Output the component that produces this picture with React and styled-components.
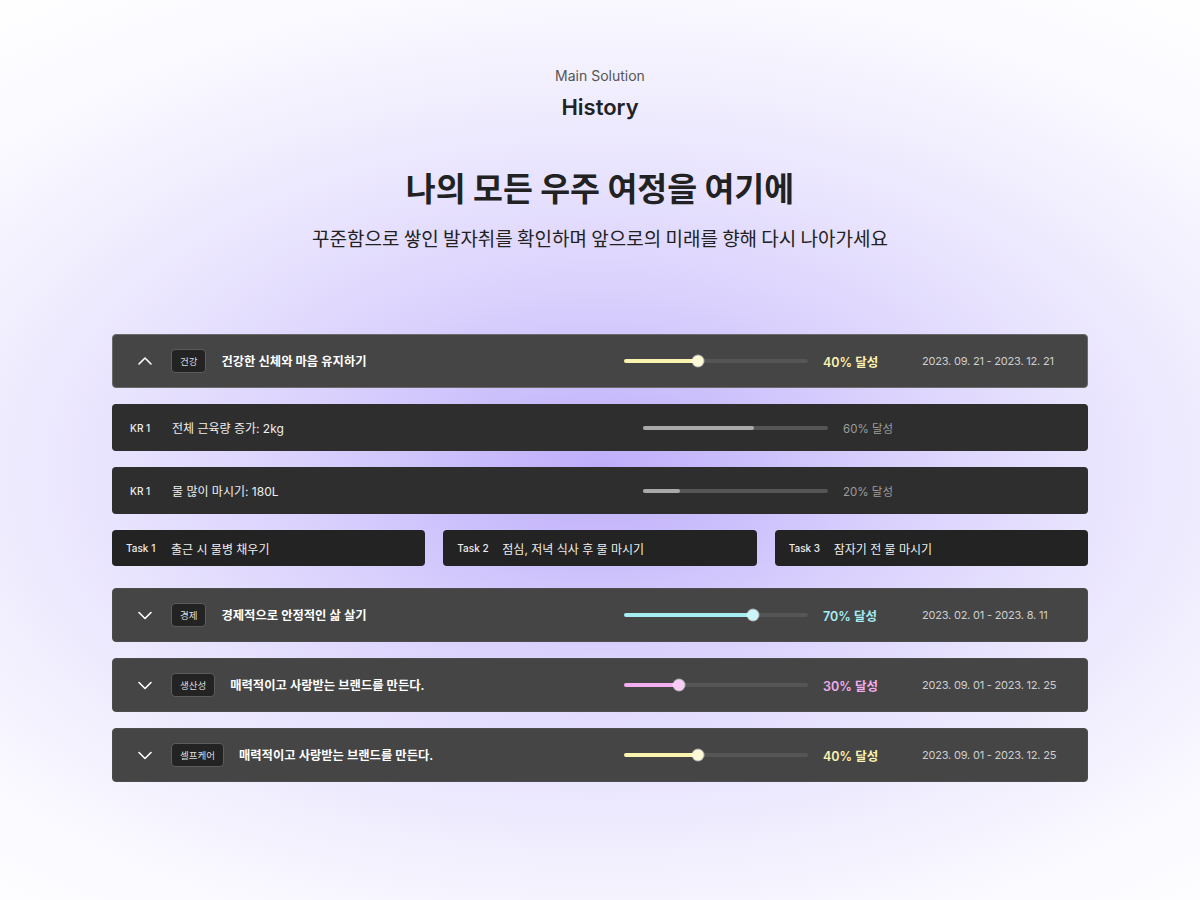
import React from 'react';
import styled, { createGlobalStyle } from 'styled-components';

const GlobalStyle = createGlobalStyle`
  html, body {
    margin: 0;
    padding: 0;
  }
  body {
    font-family: "Inter", "Noto Sans CJK KR", sans-serif;
    background: #ffffff;
  }
`;

const Page = styled.main`
  width: 1200px;
  height: 900px;
  overflow: hidden;
  background: radial-gradient(
    ellipse 1000px 600px at 50% 470px,
    #bfadfb 0%,
    #cbbffc 15%,
    #dad1fd 30%,
    #e9e4fe 50%,
    #f2effe 65%,
    #faf9ff 80%,
    #ffffff 100%
  );
  display: flex;
  flex-direction: column;
  align-items: center;
`;

const Header = styled.header`
  display: flex;
  flex-direction: column;
  align-items: center;
  padding-top: 67px;
`;

const Eyebrow = styled.div`
  font-size: 14px;
  line-height: 18px;
  color: #555;
`;

const SectionTitle = styled.h2`
  margin: 9px 0 0;
  font-size: 22px;
  line-height: 26px;
  font-weight: 600;
  color: #222;
`;

const Headline = styled.h1`
  margin: 47px 0 0;
  font-family: "Noto Sans CJK KR", sans-serif;
  font-size: 32.5px;
  line-height: 40px;
  font-weight: 700;
  color: #222;
`;

const Lead = styled.p`
  margin: 18px 0 0;
  font-family: "Noto Sans CJK KR", sans-serif;
  font-size: 19px;
  line-height: 26px;
  color: #222;
`;

const List = styled.section`
  width: 976px;
  margin-top: 83px;
  display: flex;
  flex-direction: column;
`;

const GoalRow = styled.div`
  height: 54px;
  box-sizing: border-box;
  margin-top: ${p => p.$gap}px;
  background: #454545;
  border: 1px solid ${p => (p.$open ? '#6a6a6a' : '#4c4c4c')};
  border-radius: 4px;
  display: grid;
  grid-template-columns: 487px 184px 114px 1fr;
  align-items: center;
  padding-left: 24px;
`;

const GoalLeft = styled.div`
  display: flex;
  align-items: center;
`;

const Chevron = styled.svg`
  width: 16px;
  height: 16px;
  flex: none;
  margin-right: 18px;
`;

const Tag = styled.span`
  height: 24px;
  box-sizing: border-box;
  padding: 0 8px;
  display: inline-flex;
  align-items: center;
  background: #232323;
  border: 1px solid #5c5c5c;
  border-radius: 4px;
  font-size: 9.5px;
  color: #ddd;
  margin-right: 15px;
`;

const GoalTitle = styled.span`
  font-size: 12.3px;
  font-weight: 600;
  color: #fff;
`;

const Track = styled.div`
  position: relative;
  height: 4px;
  border-radius: 2px;
  background: ${p => p.$track};
`;

const Fill = styled.div`
  height: 100%;
  border-radius: 2px;
  background: ${p => p.$color};
`;

const Thumb = styled.span`
  position: absolute;
  top: 50%;
  width: 11px;
  height: 11px;
  border-radius: 50%;
  transform: translate(-50%, -50%);
  background: ${p => p.$color};
  box-shadow: 0 0 0 1px rgba(255, 255, 255, 0.55);
`;

const Percent = styled.span`
  padding-left: 15px;
  font-size: ${p => (p.$bold ? 12.5 : 11.5)}px;
  font-weight: ${p => (p.$bold ? 600 : 400)};
  color: ${p => p.$color};
`;

const Dates = styled.span`
  font-size: 11px;
  color: #cfcfcf;
  letter-spacing: -0.2px;
`;

const KrRow = styled.div`
  height: 47px;
  margin-top: 16px;
  background: #2e2e2e;
  border-radius: 4px;
  display: grid;
  grid-template-columns: 42px 471px 185px 1fr;
  align-items: center;
  padding-left: 18px;
`;

const SmallLabel = styled.span`
  font-size: 10px;
  font-weight: 500;
  color: #eee;
`;

const KrText = styled.span`
  font-size: 12px;
  color: #eee;
`;

const TaskGrid = styled.div`
  margin-top: 16px;
  display: grid;
  grid-template-columns: repeat(3, 1fr);
  gap: 18px;
`;

const TaskCard = styled.div`
  height: 36px;
  background: #232323;
  border-radius: 4px;
  display: grid;
  grid-template-columns: 45px 1fr;
  align-items: center;
  padding-left: 14px;
`;

const ChevronIcon = ({ up }) => (
  <Chevron viewBox="0 0 16 16">
    <polyline
      points={up ? '2,11 8,5 14,11' : '2,5.5 8,11.5 14,5.5'}
      fill="none"
      stroke="#fff"
      strokeWidth="1.6"
      strokeLinecap="round"
      strokeLinejoin="round"
    />
  </Chevron>
);

const Progress = ({ value, color, thumb, track, withThumb }) => (
  <Track $track={track}>
    <Fill $color={color} style={{ width: `${value}%` }} />
    {withThumb && <Thumb $color={thumb} style={{ left: `${value}%` }} />}
  </Track>
);

const Goal = ({ open, tag, title, value, color, thumb, dates, gap }) => (
  <GoalRow $open={open} $gap={gap}>
    <GoalLeft>
      <ChevronIcon up={open} />
      <Tag>{tag}</Tag>
      <GoalTitle>{title}</GoalTitle>
    </GoalLeft>
    <Progress value={value} color={color} thumb={thumb} track="#555" withThumb />
    <Percent $color={color} $bold>
      {value}% 달성
    </Percent>
    <Dates>{dates}</Dates>
  </GoalRow>
);

const KeyResult = ({ text, value }) => (
  <KrRow>
    <SmallLabel>KR 1</SmallLabel>
    <KrText>{text}</KrText>
    <Progress value={value} color="#a9a9a9" track="#555" />
    <Percent $color="#9c9c9c">{value}% 달성</Percent>
  </KrRow>
);

const tasks = ['출근 시 물병 채우기', '점심, 저녁 식사 후 물 마시기', '잠자기 전 물 마시기'];

const goals = [
  {
    tag: '경제',
    title: '경제적으로 안정적인 삶 살기',
    value: 70,
    color: '#a6edf3',
    thumb: '#c9f6f9',
    dates: '2023. 02. 01 - 2023. 8. 11',
    gap: 22
  },
  {
    tag: '생산성',
    title: '매력적이고 사랑받는 브랜드를 만든다.',
    value: 30,
    color: '#f2aeee',
    thumb: '#f8cdf5',
    dates: '2023. 09. 01 - 2023. 12. 25',
    gap: 16
  },
  {
    tag: '셀프케어',
    title: '매력적이고 사랑받는 브랜드를 만든다.',
    value: 40,
    color: '#fbf4b0',
    thumb: '#fdf8d6',
    dates: '2023. 09. 01 - 2023. 12. 25',
    gap: 16
  }
];

const App = () => (
  <>
    <GlobalStyle />
    <Page>
      <Header>
        <Eyebrow>Main Solution</Eyebrow>
        <SectionTitle>History</SectionTitle>
        <Headline>나의 모든 우주 여정을 여기에</Headline>
        <Lead>꾸준함으로 쌓인 발자취를 확인하며 앞으로의 미래를 향해 다시 나아가세요</Lead>
      </Header>
      <List>
        <Goal
          open
          tag="건강"
          title="건강한 신체와 마음 유지하기"
          value={40}
          color="#fbf4b0"
          thumb="#fdf8d6"
          dates="2023. 09. 21 - 2023. 12. 21"
          gap={0}
        />
        <KeyResult text="전체 근육량 증가: 2kg" value={60} />
        <KeyResult text="물 많이 마시기: 180L" value={20} />
        <TaskGrid>
          {tasks.map((task, i) => (
            <TaskCard key={task}>
              <SmallLabel>Task {i + 1}</SmallLabel>
              <KrText>{task}</KrText>
            </TaskCard>
          ))}
        </TaskGrid>
        {goals.map(goal => (
          <Goal key={goal.tag} {...goal} />
        ))}
      </List>
    </Page>
  </>
);

export default App;
